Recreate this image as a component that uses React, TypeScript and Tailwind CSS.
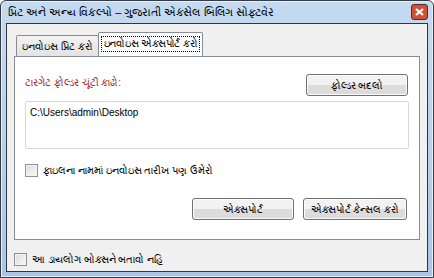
function Btn({ label, className }: { label: string; className: string }) {
  return (
    <button
      className={`flex h-[22px] items-center justify-center rounded-[3px] border border-[#707070] bg-gradient-to-b from-[#f2f2f2] from-50% to-[#dcdcdc] to-50% text-[10px] text-black shadow-[inset_0_0_0_1px_#fcfcfc] ${className}`}
    >
      {label}
    </button>
  );
}

function Check({ label }: { label: string }) {
  return (
    <label className="flex items-center gap-[5px] text-[10px] text-black">
      <span className="h-[13px] w-[13px] border border-[#8f8f8f] bg-gradient-to-br from-[#dcdcdc] to-[#f8f8f8] shadow-[inset_0_0_0_1px_#f4f4f4]" />
      {label}
    </label>
  );
}

export default function App() {
  return (
    <div
      className="h-[278px] w-[434px] overflow-hidden"
      style={{ fontFamily: '"Liberation Sans", "Noto Sans", sans-serif' }}
    >
      {/* window frame */}
      <div className="flex h-full flex-col rounded-t-[6px] border border-[#353b44] bg-gradient-to-b from-[#c4daf0] via-[#b9d1ea] to-[#a9c6e6] px-[5px] pb-[5px] shadow-[inset_0_0_0_1px_#e8f1fb]">
        {/* title bar */}
        <div className="flex h-[22px] items-center justify-between pl-[2px]">
          <span className="text-[11px] text-black">
            પ્રિંટ અને અન્ય વિકલ્પો – ગુજરાતી એક્સેલ બિલિંગ સોફ્ટવેર
          </span>
          <div className="flex h-[16px] w-[17px] items-center justify-center rounded-[3px] border border-[#5a2a20] bg-[#cf5236]">
            <svg width="9" height="8" viewBox="0 0 9 8">
              <path d="M1 1 L8 7 M8 1 L1 7" stroke="#fff" strokeWidth="2.2" />
            </svg>
          </div>
        </div>

        {/* client area */}
        <div className="flex flex-1 flex-col border border-[#2c3540] bg-[#f0f0f0] px-[7px] pt-[8px]">
          {/* tabs */}
          <div className="flex items-end pl-[2px]">
            <div className="flex h-[21px] items-center rounded-t-[2px] border border-b-0 border-[#898c95] bg-gradient-to-b from-[#f2f2f2] to-[#e3e3e3] px-[5px] text-[10px] text-black">
              ઇનવોઇસ પ્રિંટ કરો
            </div>
            <div className="-ml-[1px] flex h-[24px] items-start rounded-t-[2px] border border-b-0 border-[#898c95] bg-white px-[2px] pt-[3px] text-[10px] tracking-[-0.2px] text-black">
              <span className="border border-dotted border-black px-[2px] leading-[14px]">
                ઇનવોઇસ એક્સપોર્ટ કરો
              </span>
            </div>
          </div>

          {/* panel */}
          <div className="flex h-[184px] flex-col border border-[#898c95] bg-white px-[10px] pt-[17px]">
            <div className="flex items-start justify-between">
              <span className="pt-[1px] text-[10px] text-[#a52a2a]">
                ટારગેટ ફોલ્ડર ચૂંટી કાઢો:
              </span>
              <Btn label="ફોલ્ડર બદલો" className="mr-[1px] w-[102px]" />
            </div>
            <div className="mt-[5px] h-[48px] rounded-[2px] border border-[#d5d8de] px-[4px] pt-[3px] text-[10px] text-black">
              C:\Users\admin\Desktop
            </div>
            <div className="mt-[14px]">
              <Check label="ફાઇલના નામમાં ઇનવોઇસ તારીખ પણ ઉમેરો" />
            </div>
            <div className="mt-[20px] flex justify-end gap-[9px] pr-[2px]">
              <Btn label="એક્સપોર્ટ" className="w-[102px]" />
              <Btn label="એક્સપોર્ટ કેન્સલ કરો" className="w-[104px]" />
            </div>
          </div>

          {/* footer */}
          <div className="pt-[12px]">
            <Check label="આ ડાયલોગ બોક્સને બતાવો નહિ" />
          </div>
        </div>
      </div>
    </div>
  );
}
